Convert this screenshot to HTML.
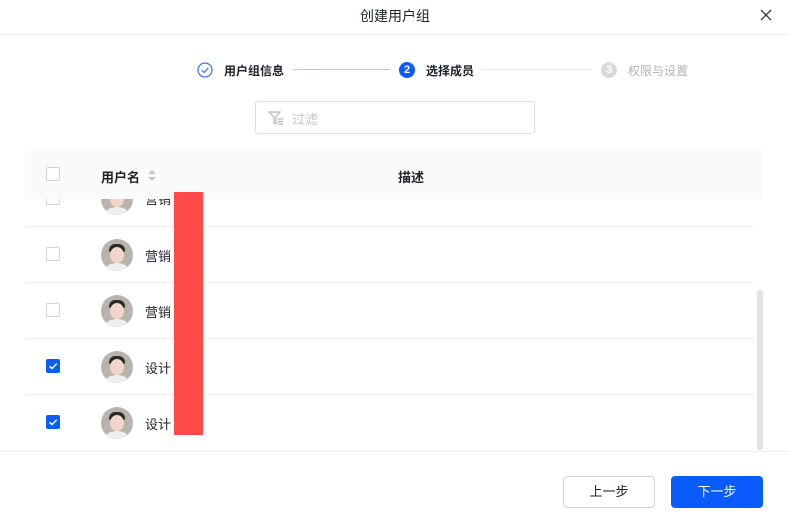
<!DOCTYPE html><html><head><meta charset="utf-8"><style>
*{margin:0;padding:0;box-sizing:border-box}
body{width:790px;height:528px;background:#fff;font-family:"Liberation Sans","Noto Sans CJK SC",sans-serif;position:relative;overflow:hidden;color:#1d2129}
.a{position:absolute}
.cb{position:absolute;width:14px;height:14px;border:1px solid #d0d3d8;border-radius:2px;background:#fff}
.cbc{background:#0a5cff;border-color:#0a5cff}
.av{position:absolute;width:32px;height:32px;border-radius:50%;background:#b8b3ac;overflow:hidden}
.av i{position:absolute;left:9px;top:8px;width:14px;height:16px;border-radius:50%;background:#f0d6c8}
.av b{position:absolute;left:8px;top:5px;width:16px;height:8px;border-radius:8px 8px 2px 2px;background:#2c2a28}
.av u{position:absolute;left:5px;top:24px;width:22px;height:12px;border-radius:50%;background:#eee}
.line{position:absolute;left:25px;width:732px;height:1px;background:#eceef1}
.t{position:absolute;font-size:13px;color:#1d2129}
</style></head><body>
<div class="a" style="left:0;top:6px;width:790px;text-align:center;font-size:14px;color:#1d2129">创建用户组</div>
<svg class="a" style="left:760px;top:9px" width="12" height="12"><path d="M1 1L11 11M11 1L1 11" stroke="#333" stroke-width="1.3"/></svg>
<div class="a" style="left:0;top:34px;width:790px;height:1px;background:#eceef1"></div>
<svg class="a" style="left:197px;top:62px" width="16" height="16"><circle cx="8" cy="8" r="7" fill="none" stroke="#3a6ff0" stroke-width="1.2"/><path d="M4.8 8.2L7.2 10.5L11.3 5.8" fill="none" stroke="#3a6ff0" stroke-width="1.2"/></svg>
<div class="a" style="left:224px;top:62px;font-size:12px;font-weight:bold">用户组信息</div>
<div class="a" style="left:293px;top:69px;width:97px;height:1px;background:#b7c6ee"></div>
<div class="a" style="left:399px;top:62px;width:16px;height:16px;border-radius:50%;background:#0a5cff;color:#fff;font-size:11px;font-weight:bold;text-align:center;line-height:16px">2</div>
<div class="a" style="left:426px;top:62px;font-size:12px;font-weight:bold">选择成员</div>
<div class="a" style="left:482px;top:69px;width:110px;height:1px;background:#e5e6eb"></div>
<div class="a" style="left:601px;top:62px;width:16px;height:16px;border-radius:50%;background:#d9d9d9;color:#fff;font-size:11px;font-weight:bold;text-align:center;line-height:16px">3</div>
<div class="a" style="left:628px;top:62px;font-size:12px;color:#b0b3b8">权限与设置</div>
<div class="a" style="left:255px;top:101px;width:280px;height:33px;border:1px solid #dcdee2;border-radius:3px"></div>
<svg class="a" style="left:268px;top:110px" width="16" height="16"><path d="M1 2H12L8 7V14L6 13V7Z" fill="none" stroke="#b5b8bd" stroke-width="1.2"/><path d="M10 9H15M10 11.5H15M10 14H15" stroke="#b5b8bd" stroke-width="1.2"/></svg>
<div class="a" style="left:292px;top:109px;font-size:13px;color:#c0c3c8">过滤</div>
<!-- rows -->
<div class="cb" style="left:46px;top:191px"></div>
<div class="av" style="left:101px;top:183px"><b></b><i></i><u></u></div>
<div class="t" style="left:145px;top:189px">营销</div>
<div class="line" style="top:226px"></div>
<div class="cb" style="left:46px;top:247px"></div>
<div class="av" style="left:101px;top:239px"><b></b><i></i><u></u></div>
<div class="t" style="left:145px;top:246px">营销</div>
<div class="line" style="top:282px"></div>
<div class="cb" style="left:46px;top:303px"></div>
<div class="av" style="left:101px;top:295px"><b></b><i></i><u></u></div>
<div class="t" style="left:145px;top:302px">营销</div>
<div class="line" style="top:338px"></div>
<div class="cb cbc" style="left:46px;top:359px"><svg width="12" height="12" style="position:absolute;left:0;top:0"><path d="M2.5 6.2L5 8.6L9.8 3.6" fill="none" stroke="#fff" stroke-width="1.5"/></svg></div>
<div class="av" style="left:101px;top:351px"><b></b><i></i><u></u></div>
<div class="t" style="left:145px;top:358px">设计</div>
<div class="line" style="top:394px"></div>
<div class="cb cbc" style="left:46px;top:415px"><svg width="12" height="12" style="position:absolute;left:0;top:0"><path d="M2.5 6.2L5 8.6L9.8 3.6" fill="none" stroke="#fff" stroke-width="1.5"/></svg></div>
<div class="av" style="left:101px;top:407px"><b></b><i></i><u></u></div>
<div class="t" style="left:145px;top:414px">设计</div>
<!-- header -->
<div class="a" style="left:25px;top:151px;width:738px;height:48px;background:#fafafa"></div>
<div class="cb" style="left:46px;top:167px"></div>
<div class="a" style="left:101px;top:167px;font-size:13px;font-weight:bold">用户名</div>
<svg class="a" style="left:147px;top:169px" width="10" height="14"><path d="M1 5L5 1L9 5Z M1 8L5 12L9 8Z" fill="#c4c7cc"/></svg>
<div class="a" style="left:398px;top:167px;font-size:13px;font-weight:bold">描述</div>
<div class="a" style="left:174px;top:192px;width:29px;height:243px;background:#ff4949"></div>
<div class="a" style="left:757px;top:290px;width:6px;height:160px;border-radius:3px;background:#e3e3e3"></div>
<div class="a" style="left:0;top:451px;width:790px;height:1px;background:#eceef1"></div>
<div class="a" style="left:563px;top:476px;width:92px;height:32px;border:1px solid #d0d3d8;border-radius:4px;text-align:center;line-height:30px;font-size:13px">上一步</div>
<div class="a" style="left:671px;top:476px;width:92px;height:32px;background:#0a5cff;border-radius:4px;text-align:center;line-height:32px;font-size:13px;color:#fff">下一步</div>
</body></html>
